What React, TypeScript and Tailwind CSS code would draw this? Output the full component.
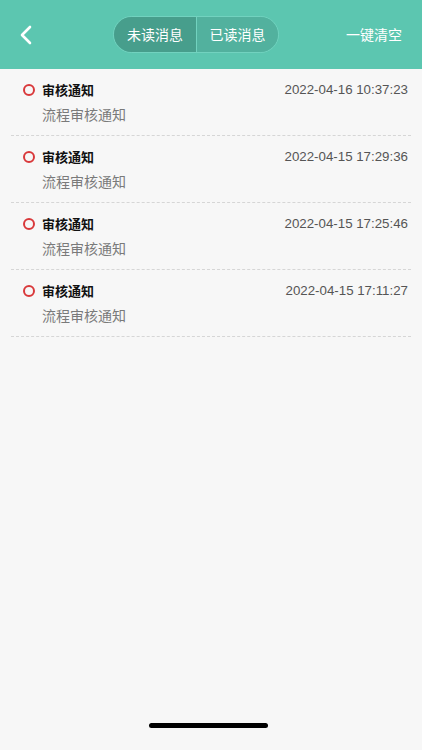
import React from "react";

const items = [
  { title: "审核通知", time: "2022-04-16 10:37:23", desc: "流程审核通知" },
  { title: "审核通知", time: "2022-04-15 17:29:36", desc: "流程审核通知" },
  { title: "审核通知", time: "2022-04-15 17:25:46", desc: "流程审核通知" },
  { title: "审核通知", time: "2022-04-15 17:11:27", desc: "流程审核通知" },
];

export default function App() {
  return (
    <div
      className="w-[422px] h-[750px] bg-[#f7f7f7] flex flex-col relative overflow-hidden"
      style={{ fontFamily: '"PingFang SC", "Noto Sans CJK SC", "Liberation Sans", sans-serif' }}
    >
      <div className="h-[69px] bg-[#5cc6b0] flex items-center px-[19px] shrink-0">
        <div className="w-[80px] flex items-center">
          <svg width="14" height="20" viewBox="0 0 14 20" className="mt-[1px]">
            <path d="M11 2 L3 10 L11 18" fill="none" stroke="#fff" strokeWidth="2.6" strokeLinecap="round" strokeLinejoin="round" />
          </svg>
        </div>
        <div className="ml-[14px] flex h-[37px] w-[166px] rounded-full border border-[#72d2bf] overflow-hidden">
          <div className="w-[82px] bg-[#479e8c] flex items-center justify-center text-white text-[14px]">未读消息</div>
          <div className="w-px bg-[#72d2bf]" />
          <div className="flex-1 bg-[#52b19e] flex items-center justify-center text-white text-[14px]">已读消息</div>
        </div>
        <div className="ml-auto mr-[1px] text-white text-[14px]">一键清空</div>
      </div>
      <div className="flex flex-col px-[11px]">
        {items.map((it, i) => (
          <div key={i} className="h-[67px] border-b border-dashed border-[#d6d6d6] flex flex-col pt-[11px] px-[12px] pr-[3px]">
            <div className="flex items-center h-[20px]">
              <span className="w-[12px] h-[12px] rounded-full border-[2px] border-[#d9393b] mr-[7px]" />
              <span className="text-[13px] font-bold text-[#111]">{it.title}</span>
              <span className="ml-auto text-[13.3px] text-[#555]" style={{ fontFamily: '"Liberation Sans", sans-serif' }}>{it.time}</span>
            </div>
            <div className="mt-[4px] ml-[19px] text-[14px] text-[#7a7a7a]">{it.desc}</div>
          </div>
        ))}
      </div>
      <div className="absolute left-[149px] top-[723px] w-[119px] h-[5px] rounded-full bg-black" />
    </div>
  );
}
